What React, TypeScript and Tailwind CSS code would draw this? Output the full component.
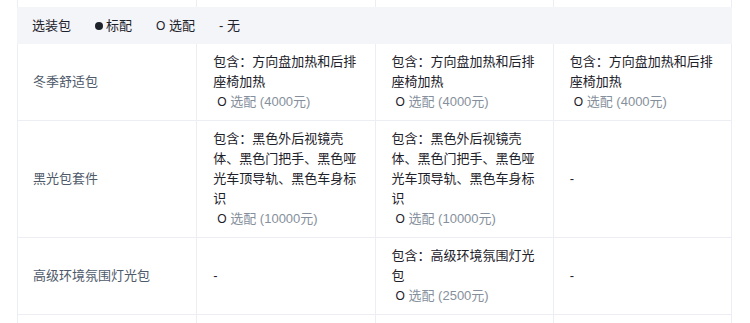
const rows = [
  {
    name: "冬季舒适包",
    cells: [
      { text: "包含：方向盘加热和后排座椅加热", price: "4000元" },
      { text: "包含：方向盘加热和后排座椅加热", price: "4000元" },
      { text: "包含：方向盘加热和后排座椅加热", price: "4000元" },
    ],
  },
  {
    name: "黑光包套件",
    cells: [
      { text: "包含：黑色外后视镜壳体、黑色门把手、黑色哑光车顶导轨、黑色车身标识", price: "10000元" },
      { text: "包含：黑色外后视镜壳体、黑色门把手、黑色哑光车顶导轨、黑色车身标识", price: "10000元" },
      null,
    ],
  },
  {
    name: "高级环境氛围灯光包",
    cells: [null, { text: "包含：高级环境氛围灯光包", price: "2500元" }, null],
  },
];

type Cell = { text: string; price: string } | null;

function OptionCell({ cell }: { cell: Cell }) {
  if (!cell) {
    return (
      <div className="flex items-center border-l border-[#eceef3] px-4 text-[#1d2129]">-</div>
    );
  }
  return (
    <div className="flex flex-col justify-center border-l border-[#eceef3] px-4 py-2">
      <div className="text-[#1d2129]">{cell.text}</div>
      <div className="pl-1">
        <span className="text-[12px] text-[#1d2129]">O</span>{" "}
        <span className="text-[#86909c]">选配 ({cell.price})</span>
      </div>
    </div>
  );
}

export default function App() {
  return (
    <div
      className="h-[323px] w-[750px] overflow-hidden bg-white text-[13px] leading-[20px]"
      style={{ fontFamily: "'Liberation Sans', 'Noto Sans CJK SC', sans-serif" }}
    >
      <div className="ml-[17px] w-[715px]">
        <div className="grid h-[7px] grid-cols-4 border-x border-[#eceef3]">
          <div />
          <div className="border-l border-[#eceef3]" />
          <div className="border-l border-[#eceef3]" />
          <div className="border-l border-[#eceef3]" />
        </div>

        <div className="flex h-[37px] items-center gap-6 bg-[#f3f5f9] px-[15px] text-[#1d2129]">
          <span>选装包</span>
          <span className="flex items-center">
            <span className="mr-[3px] inline-block h-2 w-2 rounded-full bg-[#1d2129]" />
            标配
          </span>
          <span>
            <span className="text-[12px]">O</span> 选配
          </span>
          <span>- 无</span>
        </div>

        {rows.map((row) => (
          <div
            key={row.name}
            className="grid grid-cols-4 border-x border-b border-[#eceef3]"
          >
            <div className="flex items-center px-[15px] text-[#4e5969]">{row.name}</div>
            {row.cells.map((c, i) => (
              <OptionCell key={i} cell={c} />
            ))}
          </div>
        ))}
        <div className="grid h-[10px] grid-cols-4 border-x border-[#eceef3]">
          <div />
          <div className="border-l border-[#eceef3]" />
          <div className="border-l border-[#eceef3]" />
          <div className="border-l border-[#eceef3]" />
        </div>
      </div>
    </div>
  );
}
